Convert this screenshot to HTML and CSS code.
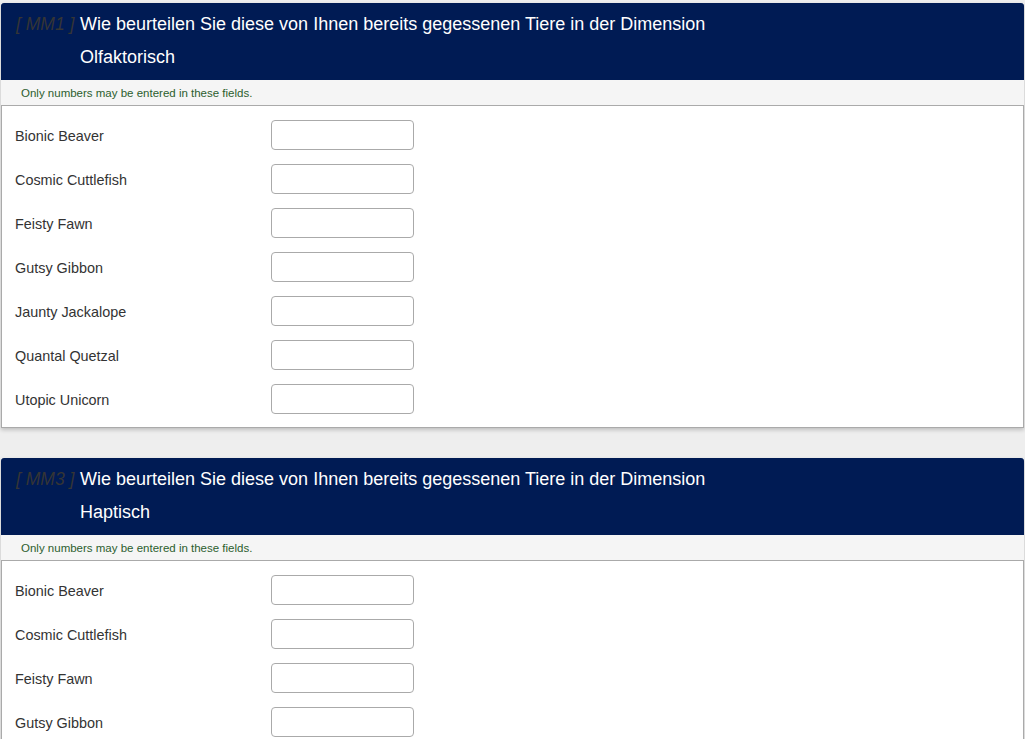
FILE: index.html
```html
<!DOCTYPE html>
<html lang="de">
<head>
<meta charset="utf-8">
<title>Survey</title>
<link rel="stylesheet" href="styles.css">
</head>
<body>
<div class="page">
  <section class="question">
    <div class="q-head">
      <span class="q-code">[ MM1 ]</span>
      <div class="q-text">
        <p>Wie beurteilen Sie diese von Ihnen bereits gegessenen Tiere in der Dimension</p>
        <p>Olfaktorisch</p>
      </div>
    </div>
    <div class="q-help">Only numbers may be entered in these fields.</div>
    <div class="q-body">
      <div class="row"><label>Bionic Beaver</label><input type="text"></div>
      <div class="row"><label>Cosmic Cuttlefish</label><input type="text"></div>
      <div class="row"><label>Feisty Fawn</label><input type="text"></div>
      <div class="row"><label>Gutsy Gibbon</label><input type="text"></div>
      <div class="row"><label>Jaunty Jackalope</label><input type="text"></div>
      <div class="row"><label>Quantal Quetzal</label><input type="text"></div>
      <div class="row"><label>Utopic Unicorn</label><input type="text"></div>
    </div>
  </section>
  <section class="question">
    <div class="q-head">
      <span class="q-code">[ MM3 ]</span>
      <div class="q-text">
        <p>Wie beurteilen Sie diese von Ihnen bereits gegessenen Tiere in der Dimension</p>
        <p>Haptisch</p>
      </div>
    </div>
    <div class="q-help">Only numbers may be entered in these fields.</div>
    <div class="q-body">
      <div class="row"><label>Bionic Beaver</label><input type="text"></div>
      <div class="row"><label>Cosmic Cuttlefish</label><input type="text"></div>
      <div class="row"><label>Feisty Fawn</label><input type="text"></div>
      <div class="row"><label>Gutsy Gibbon</label><input type="text"></div>
      <div class="row"><label>Jaunty Jackalope</label><input type="text"></div>
      <div class="row"><label>Quantal Quetzal</label><input type="text"></div>
      <div class="row"><label>Utopic Unicorn</label><input type="text"></div>
    </div>
  </section>
</div>
</body>
</html>
```
FILE: styles.css
```css
html, body {
  margin: 0;
  padding: 0;
  background: #eeeeee;
  font-family: "Liberation Sans", Arial, sans-serif;
}
.page {
  padding: 3px 1px 0 1px;
  display: flex;
  flex-direction: column;
  gap: 30px;
}
.question {
  box-shadow: 0 2px 4px rgba(0, 0, 0, 0.2);
  background: #fff;
}
.q-head {
  background: #001b54;
  border-radius: 3px 3px 0 0;
  display: flex;
  padding: 5px 0 6px 15px;
  height: 66px;
}
.q-code {
  font-style: italic;
  color: #353535;
  font-size: 17.5px;
  line-height: 33px;
  width: 64px;
  flex: none;
}
.q-text p {
  margin: 0;
  color: #fff;
  font-size: 18px;
  line-height: 33px;
}
.q-help {
  background: #f5f5f5;
  color: #2c5e2e;
  font-size: 11.5px;
  height: 25px;
  line-height: 26px;
  padding-left: 20px;
}
.q-body {
  border: 1px solid #aaaaaa;
  background: #fff;
  padding: 14px 0 13px 13px;
  display: flex;
  flex-direction: column;
  gap: 14px;
}
.row {
  display: flex;
  align-items: center;
  height: 30px;
}
.row label {
  width: 256px;
  font-size: 14.4px;
  color: #333;
  padding-top: 2px;
}
.row input {
  width: 143px;
  height: 30px;
  box-sizing: border-box;
  border: 1px solid #aaaaaa;
  border-radius: 4px;
  margin: 0;
  padding: 0 6px;
  background: #fff;
}
```
